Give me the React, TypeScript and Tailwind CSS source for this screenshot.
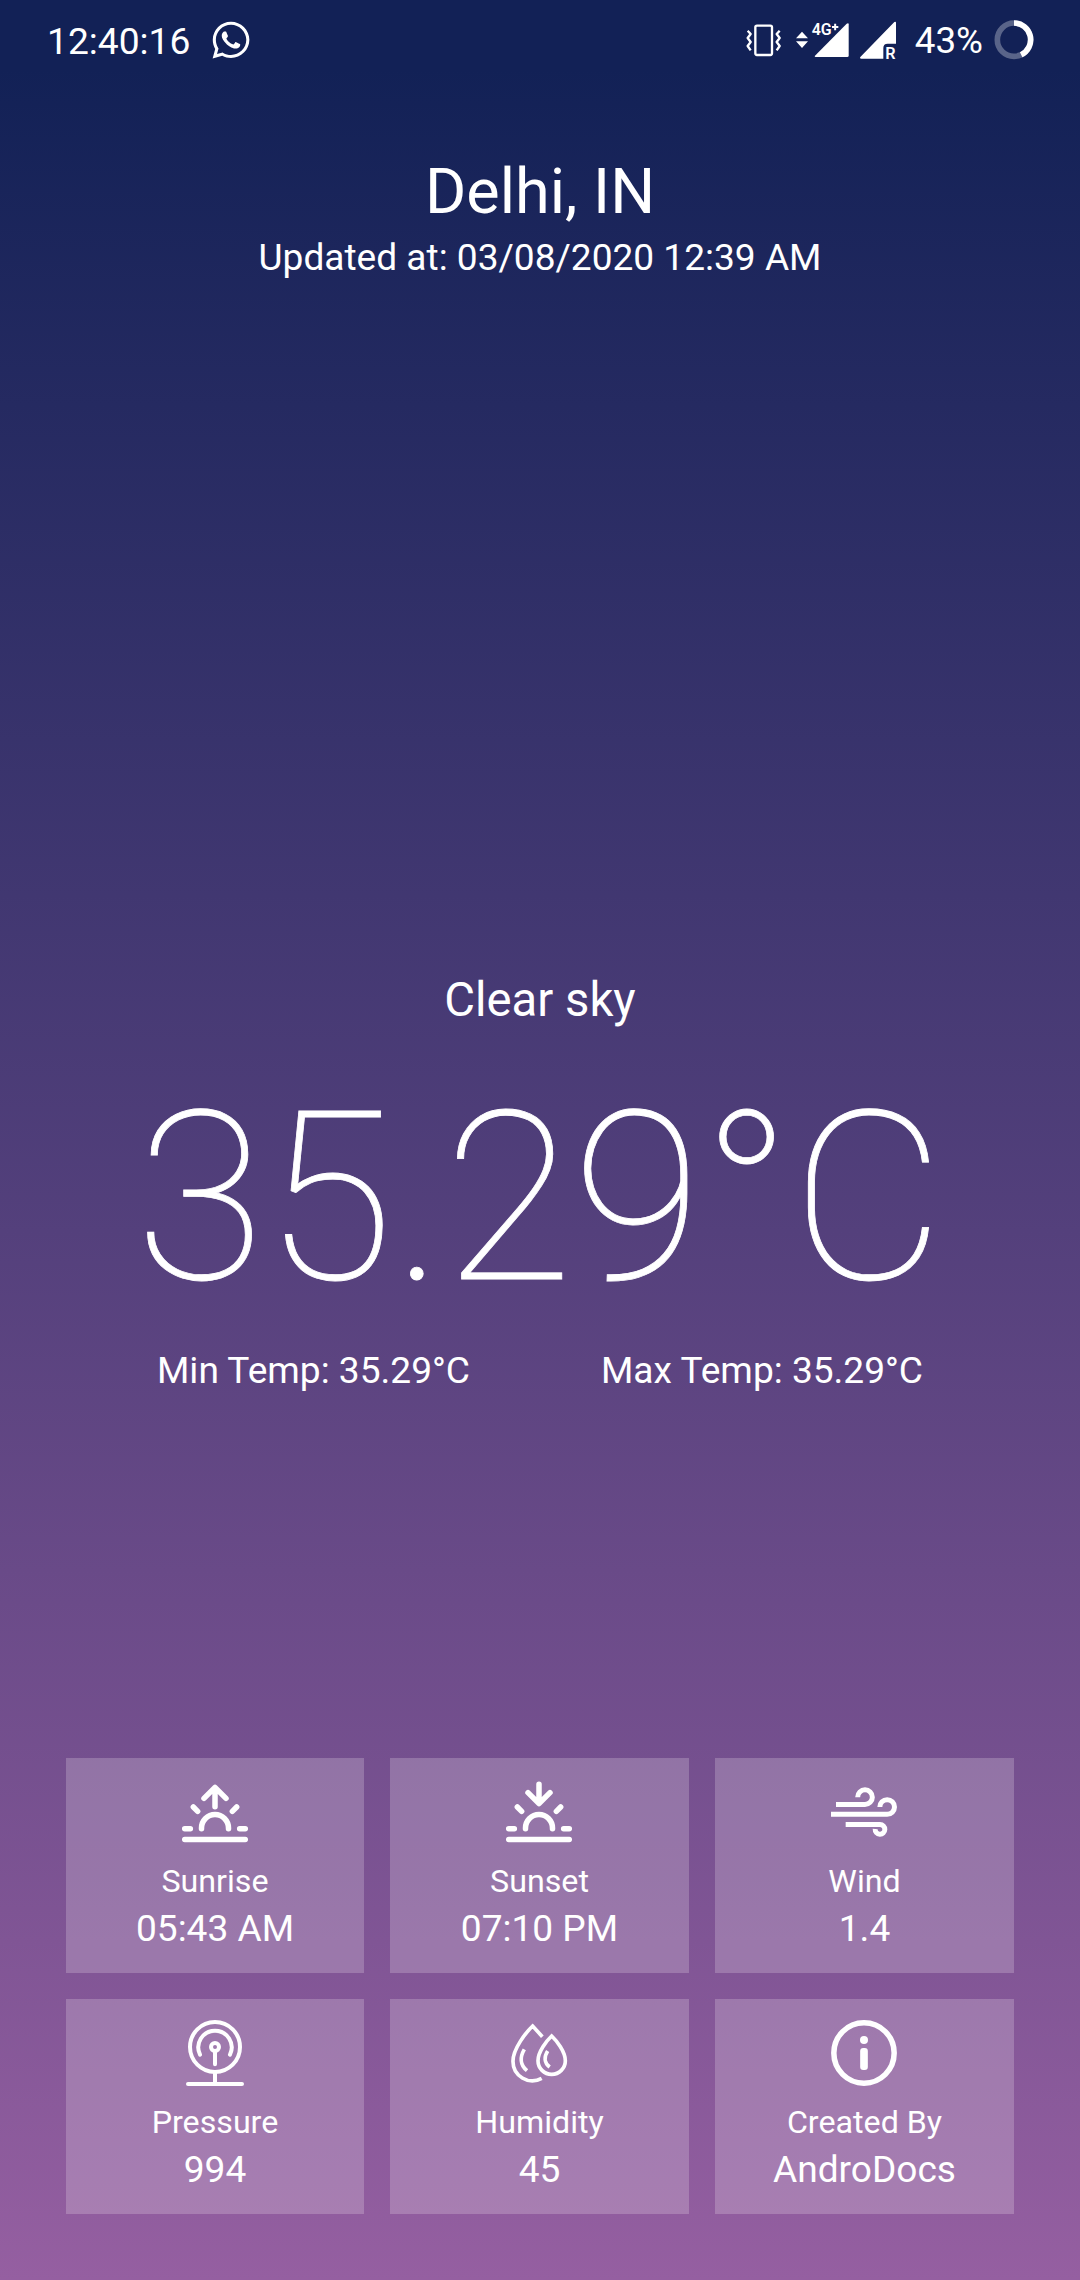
import type { ReactNode } from "react";
import { FaWhatsapp } from "react-icons/fa";

const SunArc = () => (
  <>
    <path d="M454.500 266v-2a40.500 40.500 0 0 1 81 0v2" />
    <path d="M404 266h17M569 266h17M404 298.500h182M430 201l13 13M560 201l-13 13" />
  </>
);

const icons: Record<string, ReactNode> = {
  sunrise: (
    <svg viewBox="396 117 198 198" className="size-[66px]" fill="none" stroke="white" strokeWidth="16.500" strokeLinecap="round" strokeLinejoin="round">
      <SunArc />
      <path d="M495 200v-55M462 175l33-33 33 33" />
    </svg>
  ),
  sunset: (
    <svg viewBox="396 117 198 198" className="mr-px size-[66px]" fill="none" stroke="white" strokeWidth="16.500" strokeLinecap="round" strokeLinejoin="round">
      <SunArc />
      <path d="M495 133v55M462 158l33 33 33-33" />
    </svg>
  ),
  wind: (
    <svg viewBox="393 117 198 198" className="mr-px size-[66px]" fill="none" stroke="white" strokeWidth="15">
      <path d="M408 193.500h87a22 22 0 1 0-22-22" />
      <path d="M393 223h168.500a22 22 0 1 0-22-22" />
      <path d="M437 253.500h103a14.500 14.500 0 1 1-14.500 13.500" />
    </svg>
  ),
  pressure: (
    <svg viewBox="396 120 198 198" className="size-[66px]" fill="none" stroke="white" strokeWidth="12" strokeLinecap="round">
      <circle cx="495" cy="201" r="75" />
      <path d="M450 224a50 50 0 1 1 90 0" />
      <circle cx="495" cy="201" r="12" />
      <path d="M495 214v39M495 277v34M414 312h162" />
    </svg>
  ),
  humidity: (
    <svg viewBox="378 120 198 198" className="mr-px size-[66px]" fill="none" stroke="white" strokeWidth="11">
      <path d="M487 170l-29-32c-19 18-59 68-59 105a58 58 0 0 0 86 52" />
      <path d="M515 168c-15 14-41 47-41 74a41 41 0 0 0 82 0c0-27-26-60-41-74z" />
      <path d="M433 208c-13 22-14 46 8 64M503 213c-11 17-11 35 6 48" />
    </svg>
  ),
  info: (
    <svg viewBox="393 120 198 198" className="mr-px size-[66px]" fill="none" stroke="white" strokeWidth="16.500">
      <circle cx="492" cy="219" r="90.500" />
      <circle cx="492" cy="180" r="12" fill="white" stroke="none" />
      <rect x="480.500" y="204" width="23" height="66" rx="9" fill="white" stroke="none" />
    </svg>
  ),
};

const cards = [
  { icon: "sunrise", label: "Sunrise", value: "05:43 AM" },
  { icon: "sunset", label: "Sunset", value: "07:10 PM" },
  { icon: "wind", label: "Wind", value: "1.4" },
  { icon: "pressure", label: "Pressure", value: "994" },
  { icon: "humidity", label: "Humidity", value: "45" },
  { icon: "info", label: "Created By", value: "AndroDocs" },
];

function StatusBar() {
  return (
    <header className="flex h-20 items-center pl-[47px] pr-[46px] text-[37.2px] leading-[52px]">
      <span className="pt-[2px]">12:40:16</span>
      <FaWhatsapp className="ml-[20px] size-[42px]" />
      {/* Vibrate, dual-SIM signal strength */}
      <svg viewBox="45 0 456 240" className="ml-auto h-20 w-[152px]" fill="none" stroke="white">
        <rect x="76" y="77" width="50" height="88" rx="5" strokeWidth="7" />
        <path d="M53 92l9 10-9 12 9 12-9 12 9 13M149 92l-9 10 9 12-9 12 9 12-9 13" strokeWidth="7" strokeLinejoin="round" />
        <path d="M198 115l18-20 18 20zM198 124l18 20 18-20z" fill="white" stroke="none" />
        <path d="M255 167L350 71q6-4 6 2v94q0 4-4 4h-95q-5 0-2-4z" fill="white" stroke="none" />
        <path d="M391 171L493 66q5-3 5 2v63h-25q-13 0-13 13v32h-66q-6 0-3-5z" fill="white" stroke="none" />
        <text x="245" y="104" fill="white" stroke="none" fontSize="47" fontWeight="600" textLength="60" lengthAdjust="spacingAndGlyphs">4G</text>
        <path d="M306 81h19M315.500 71v20" strokeWidth="6" />
        <text x="466" y="176" fill="white" stroke="none" fontSize="50" fontWeight="600" textLength="31" lengthAdjust="spacingAndGlyphs">R</text>
      </svg>
      <span className="ml-[18px] pt-[2px] text-[36.75px]">43%</span>
      <svg viewBox="791 59 120 120" className="ml-[11px] size-10" fill="none" stroke="white" strokeWidth="17">
        <circle cx="851" cy="118" r="50" strokeOpacity="0.3" />
        <path d="M851 68a50 50 0 0 1 21.500 95.100" />
      </svg>
    </header>
  );
}

export default function App() {
  return (
    <main className="flex h-[2280px] w-[1080px] flex-col bg-[linear-gradient(180deg,#122156_0%,#122156_3%,#54407c_54%,#955fa1_100%)] font-[Roboto,sans-serif] text-white">
      <StatusBar />
      <section className="mt-[68px] flex flex-col items-center">
        <h1 className="text-[63px] leading-[88px]">Delhi, IN</h1>
        <p className="-mt-[4px] text-[37.1px] leading-[52px]">Updated at: 03/08/2020 12:39 AM</p>
      </section>
      <section className="mt-auto flex flex-col items-center">
        <p className="text-[47.25px] leading-[66px]">Clear sky</p>
        <p className="mt-4 text-[235.5px] font-thin leading-[300px] [-webkit-text-stroke:0.8px_white]">35.29°C</p>
        <div className="-mt-[4px] flex gap-[131px] text-[37.1px] leading-[52px]">
          <p>Min Temp: 35.29°C</p>
          <p>Max Temp: 35.29°C</p>
        </div>
      </section>
      <section className="mx-[66px] mb-[66px] mt-[361px] grid grid-cols-[298px_299px_299px] gap-[26px]">
        {cards.map(({ icon, label, value }) => (
          <article key={label} className="flex h-[215px] flex-col items-center bg-[#f1ebf13c] pt-[21px]">
            {icons[icon]}
            <h2 className="mt-[14px] text-[32.2px] leading-[44px]">{label}</h2>
            <p className="text-[37.1px] leading-[51px]">{value}</p>
          </article>
        ))}
      </section>
    </main>
  );
}
